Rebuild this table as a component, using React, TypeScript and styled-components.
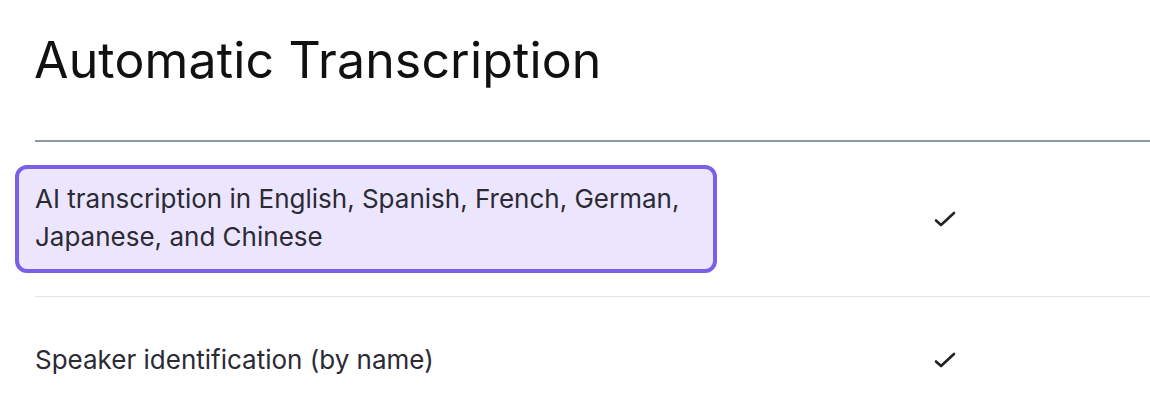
import React from 'react'
import styled, { createGlobalStyle } from 'styled-components'

const GlobalStyle = createGlobalStyle`
  html, body {
    margin: 0;
    padding: 0;
    background: #ffffff;
  }
  body {
    font-family: Inter, "Noto Sans", "Liberation Sans", sans-serif;
    overflow: hidden;
  }
`

type Feature = {
  label: string
  included: boolean
  highlighted?: boolean
}

const features: Feature[] = [
  {
    label: 'AI transcription in English, Spanish, French, German, Japanese, and Chinese',
    included: true,
    highlighted: true,
  },
  { label: 'Speaker identification (by name)', included: true },
]

const CheckIcon: React.FC = () => (
  <svg width="22" height="16" viewBox="0 0 22 16" fill="none">
    <path d="M2 9.5L7 14L20 2" stroke="#222226" strokeWidth="2.6" strokeLinecap="round" strokeLinejoin="round" />
  </svg>
)

const App: React.FC = () => {
  return (
    <>
      <GlobalStyle />
      <Section>
        <Title>Automatic Transcription</Title>
        <Divider />
        {features.map((feature, i) => (
          <Row key={feature.label} first={i === 0}>
            <FeatureCell highlighted={feature.highlighted}>{feature.label}</FeatureCell>
            <CheckCell>{feature.included && <CheckIcon />}</CheckCell>
          </Row>
        ))}
      </Section>
    </>
  )
}

const Section = styled.section`
  width: 1115px;
  padding: 30px 0 0 35px;
`

const Title = styled.h2`
  margin: 0 0 0 -1px;
  font-size: 50px;
  font-weight: 400;
  line-height: 60px;
  letter-spacing: 0.15px;
  color: #111114;
`

const Divider = styled.div`
  height: 2px;
  margin-top: 50px;
  background: #8c9aa5;
`

const Row = styled.div<{ first?: boolean }>`
  display: grid;
  grid-template-columns: 662px 498px;
  align-items: center;
  padding: ${({ first }) => (first ? '23px 0 23px' : '44px 0')};
  border-top: ${({ first }) => (first ? 'none' : '1px solid #e4e4e6')};
`

const FeatureCell = styled.div<{ highlighted?: boolean }>`
  font-size: 26px;
  line-height: 38px;
  color: #2b2a35;
  margin-left: ${({ highlighted }) => (highlighted ? '-20px' : '0')};
  padding: ${({ highlighted }) => (highlighted ? '11px 16px 13px' : '0')};
  width: ${({ highlighted }) => (highlighted ? '702px' : 'auto')};
  box-sizing: border-box;
  border: ${({ highlighted }) => (highlighted ? '4px solid #7a5fe9' : 'none')};
  border-radius: 12px;
  background: ${({ highlighted }) => (highlighted ? '#ebe6fd' : 'transparent')};
`

const CheckCell = styled.div`
  display: flex;
  justify-content: center;
  padding-right: 2px;
`

export default App
